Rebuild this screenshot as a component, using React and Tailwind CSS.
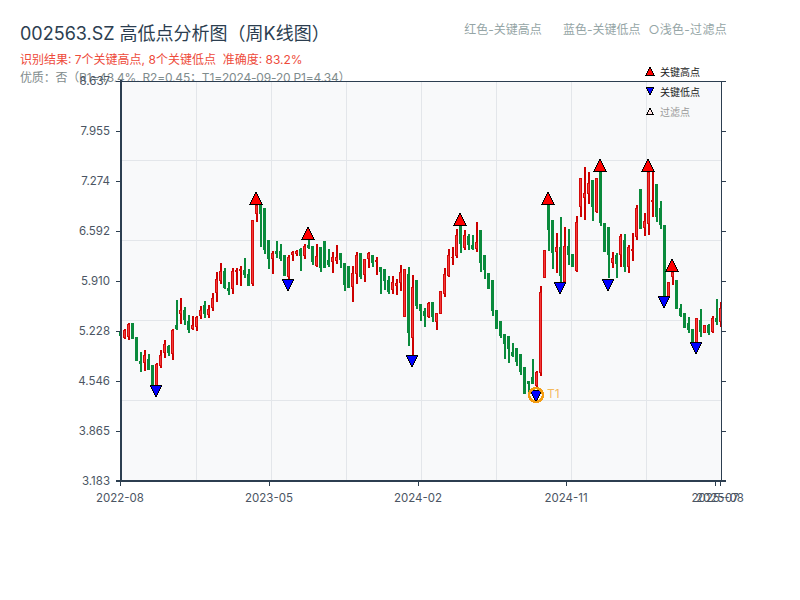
// x step is 4px, each row: color, wickTop, wickBottom, bodyTop, bodyBottom
const candles = [
  'g 331 336 331 336', 'r 329 339 330 338', 'r 323 340 324 337', 'g 323 339 323 339', 'g 337 361 337 361',
  'g 352 372 361 364', 'r 350 371 355 363', 'g 354 370 359 370', 'g 365 387 365 387', 'r 363 390 364 387',
  'r 350 368 355 366', 'r 340 358 344 353', 'g 345 356 346 353', 'r 329 360 330 354', 'g 300 330 325 329',
  'r 298 324 310 314', 'g 307 325 310 320', 'g 315 333 321 330', 'r 316 330 325 329', 'r 316 331 317 327',
  'r 306 319 310 316', 'g 301 318 305 314', 'r 305 318 309 315', 'r 293 311 298 308', 'r 272 302 279 293',
  'r 263 284 271 281', 'g 268 289 271 288', 'g 282 295 288 291', 'r 268 294 271 289', 'r 268 285 270 272',
  'r 266 286 269 271', 'g 258 278 270 275', 'g 269 286 274 286', 'r 220 286 220 284', 'r 204 222 205 214',
  'g 205 247 205 214', 'g 208 254 208 250', 'g 240 269 240 259', 'r 251 274 253 259', 'g 241 258 251 254',
  'g 244 261 251 259', 'g 255 276 255 276', 'r 255 280 257 277', 'r 251 261 252 255', 'r 250 256 251 254',
  'g 248 271 249 256', 'r 244 259 246 256', 'g 239 249 245 248', 'g 246 265 246 262', 'r 244 267 256 266',
  'g 247 272 247 268', 'g 241 268 241 268', 'g 249 267 260 265', 'r 252 273 257 262', 'r 245 264 257 261',
  'g 253 268 253 260', 'g 263 291 263 285', 'g 266 288 266 288', 'r 266 302 273 287', 'r 252 284 255 274',
  'g 253 279 253 277', 'r 259 282 259 275', 'r 252 268 253 259', 'g 255 267 255 263', 'r 257 275 260 262',
  'g 267 294 267 272', 'g 269 290 269 281', 'g 276 294 280 292', 'r 276 294 282 290', 'r 279 295 283 286',
  'r 265 291 272 283', 'r 269 317 269 317', 'g 267 346 274 333', 'r 275 355 287 338', 'g 280 309 280 306',
  'g 304 321 304 311', 'g 308 327 311 316', 'r 302 318 303 317', 'g 302 322 302 317', 'r 313 330 313 322',
  'r 291 314 291 314', 'r 268 297 274 294', 'r 249 277 255 276', 'r 247 265 257 258', 'r 229 258 235 256',
  'g 220 253 226 244', 'r 230 250 235 248', 'g 234 250 236 245', 'g 235 250 245 249', 'r 222 252 242 249',
  'g 230 272 230 263', 'g 255 279 255 270', 'g 273 289 273 289', 'g 280 316 280 311', 'g 310 329 310 329',
  'g 321 338 321 336', 'g 334 359 334 344', 'g 336 363 336 349', 'g 343 357 352 356', 'g 348 366 348 362',
  'g 354 375 354 372', 'g 367 394 367 394', 'g 381 394 381 384', 'g 359 384 377 384', 'r 371 387 372 386',
  'r 286 376 292 373', 'r 250 278 250 278', 'g 205 251 205 230', 'g 220 269 220 253', 'r 233 273 247 252',
  'g 217 283 247 276', 'r 227 283 246 282', 'g 229 265 246 255', 'g 254 267 254 267', 'r 216 272 222 271',
  'r 178 217 178 207', 'r 167 220 193 198', 'r 172 204 183 194', 'g 180 221 180 207', 'r 178 213 178 212',
  'g 171 226 171 223', 'g 223 252 223 252', 'g 227 278 227 255', 'r 252 268 258 263', 'g 253 278 255 264',
  'r 234 267 236 255', 'g 234 272 240 267', 'r 245 273 247 267', 'r 233 261 249 251', 'r 205 240 208 237',
  'g 189 229 189 229', 'r 213 236 221 228', 'r 170 235 172 224', 'r 170 217 200 202', 'g 184 222 184 217',
  'g 201 229 208 225', 'g 225 297 225 297', 'r 282 297 282 297', 'r 272 285 272 277', 'g 280 309 280 309',
  'g 304 317 308 316', 'g 313 328 313 328', 'g 317 333 323 330', 'g 329 343 329 343', 'r 318 343 318 343',
  'g 309 337 320 332', 'r 325 333 325 333', 'g 324 335 325 333', 'r 316 333 318 332', 'g 299 325 318 322',
  'r 302 327 308 322',
]

const yLabels = ['8.637', '7.955', '7.274', '6.592', '5.910', '5.228', '4.546', '3.865', '3.183']
const xLabels = [[120, '2022-08'], [269, '2023-05'], [418, '2024-02'], [566, '2024-11'], [715, '2025-07'], [720, '2025-08']]
const highs = [[256, 192], [308, 227], [460, 213], [548, 192], [600, 159], [648, 159], [672, 259]]
const lows = [[156, 385], [288, 279], [412, 355], [560, 282], [608, 279], [664, 296], [696, 342], [536, 390]]

const Candle = ({ row, index }) => {
  const [c, wickTop, wickBottom, bodyTop, bodyBottom] = row.split(' ').map((v, i) => (i ? Number(v) : v))
  const x = 120 + index * 4
  if (c === 'g') {
    return (
      <g fill="#0a8a3c">
        <rect x={x} y={wickTop} width="2" height={wickBottom - wickTop} />
        <rect x={x - 1} y={bodyTop} width="3" height={Math.max(bodyBottom - bodyTop, 1)} />
      </g>
    )
  }
  return (
    <g>
      <rect x={x} y={wickTop} width="2" height={wickBottom - wickTop} fill="#cc0000" />
      <rect x={x - 1} y={bodyTop} width="3" height={Math.max(bodyBottom - bodyTop, 1)} fill="#d40a0a" />
      <rect x={x} y={bodyTop + 1} width="1" height={Math.max(bodyBottom - bodyTop - 2, 0)} fill="#f23a3a" />
    </g>
  )
}

const Chart = () => (
  <svg viewBox="0 60 800 540" width="800" height="540" shapeRendering="crispEdges" className="block -mt-[26px]" style={{ fontFamily: 'Inter, "Noto Sans CJK SC", sans-serif' }}>
    <rect x="121" y="81" width="600" height="400" fill="#f8f9fa" />
    {[160, 240, 320, 400].map((y) => (
      <line key={y} x1="121" x2="721" y1={y} y2={y} stroke="#e3e6ea" />
    ))}
    {[196, 271, 346, 421, 496, 571, 646].map((x) => (
      <line key={x} x1={x} x2={x} y1="81" y2="481" stroke="#e3e6ea" />
    ))}

    {candles.map((row, i) => (
      <Candle key={i} row={row} index={i} />
    ))}

    <line x1="121" x2="726" y1="81" y2="81" stroke="#2c3e50" />
    <line x1="721" x2="721" y1="81" y2="481" stroke="#2c3e50" />
    <line x1="121" x2="121" y1="80" y2="482" stroke="#2c3e50" strokeWidth="2" />
    <line x1="116" x2="726" y1="481" y2="481" stroke="#2c3e50" strokeWidth="2" />

    {yLabels.map((label, i) => {
      const y = 81 + i * 50
      return (
        <g key={label}>
          <line x1="116" x2="121" y1={y} y2={y} stroke="#2c3e50" />
          <line x1="721" x2="726" y1={y} y2={y} stroke="#2c3e50" />
          <text x="110" y={y + 4} textAnchor="end" fontSize="11.5" fill="#4b5563">{label}</text>
        </g>
      )
    })}
    {xLabels.map(([x, label]) => (
      <g key={label}>
        <line x1={x} x2={x} y1="481" y2="486" stroke="#2c3e50" />
        <text x={x} y="502" textAnchor="middle" fontSize="11.5" fill="#4b5563">{label}</text>
      </g>
    ))}

    {highs.map(([x, y]) => (
      <polygon key={x} points={`${x},${y} ${x + 6},${y + 12} ${x - 6},${y + 12}`} fill="#ff0000" stroke="#000" />
    ))}
    {lows.map(([x, y]) => (
      <polygon key={x} points={`${x - 6},${y} ${x + 6},${y} ${x},${y + 12}`} fill="#0000ff" stroke="#000" />
    ))}

    <circle cx="536" cy="395" r="7" fill="none" stroke="#f39c12" strokeWidth="2.5" />
    <text x="547" y="398" fontSize="12" fill="#f39c12" fillOpacity="0.7">T1</text>

    <polygon points="650,67 654,75 646,75" fill="#ff0000" stroke="#000" />
    <text x="660" y="76" fontSize="10" fill="#222">关键高点</text>
    <polygon points="646,87 654,87 650,95" fill="#0000ff" stroke="#000" />
    <text x="660" y="96" fontSize="10" fill="#222">关键低点</text>
    <polygon points="650,108 653,114 647,114" fill="#ffe0e0" stroke="#000" />
    <text x="660" y="116" fontSize="10" fill="#999">过滤点</text>
  </svg>
)

export default function App() {
  return (
    <div className="w-[800px] h-[600px] bg-white overflow-hidden font-['Inter','Noto_Sans_CJK_SC',sans-serif]">
      <div className="flex justify-between pl-5 pr-[73px] pt-[22px]">
        <div>
          <h1 className="text-[18px] leading-6 font-normal text-[#2c3e50]">002563.SZ 高低点分析图（周K线图）</h1>
          <p className="mt-1.5 text-xs leading-4 text-[#ee4b3b]">识别结果: 7个关键高点, 8个关键低点&nbsp;&nbsp;准确度: 83.2%</p>
          <p className="mt-0.5 text-xs leading-4 tracking-[-0.18px] text-[#7f8c8d]">优质：否（R1=43.4%, R2=0.45；T1=2024-09-20 P1=4.34）</p>
        </div>
        <div className="flex gap-[21px] text-xs leading-4 text-[#95a5a6]">
          <span>红色-关键高点</span>
          <span className="flex gap-[8px]">
            <span>蓝色-关键低点</span>
            <span className="tracking-[0.3px]">○浅色-过滤点</span>
          </span>
        </div>
      </div>
      <Chart />
    </div>
  )
}
